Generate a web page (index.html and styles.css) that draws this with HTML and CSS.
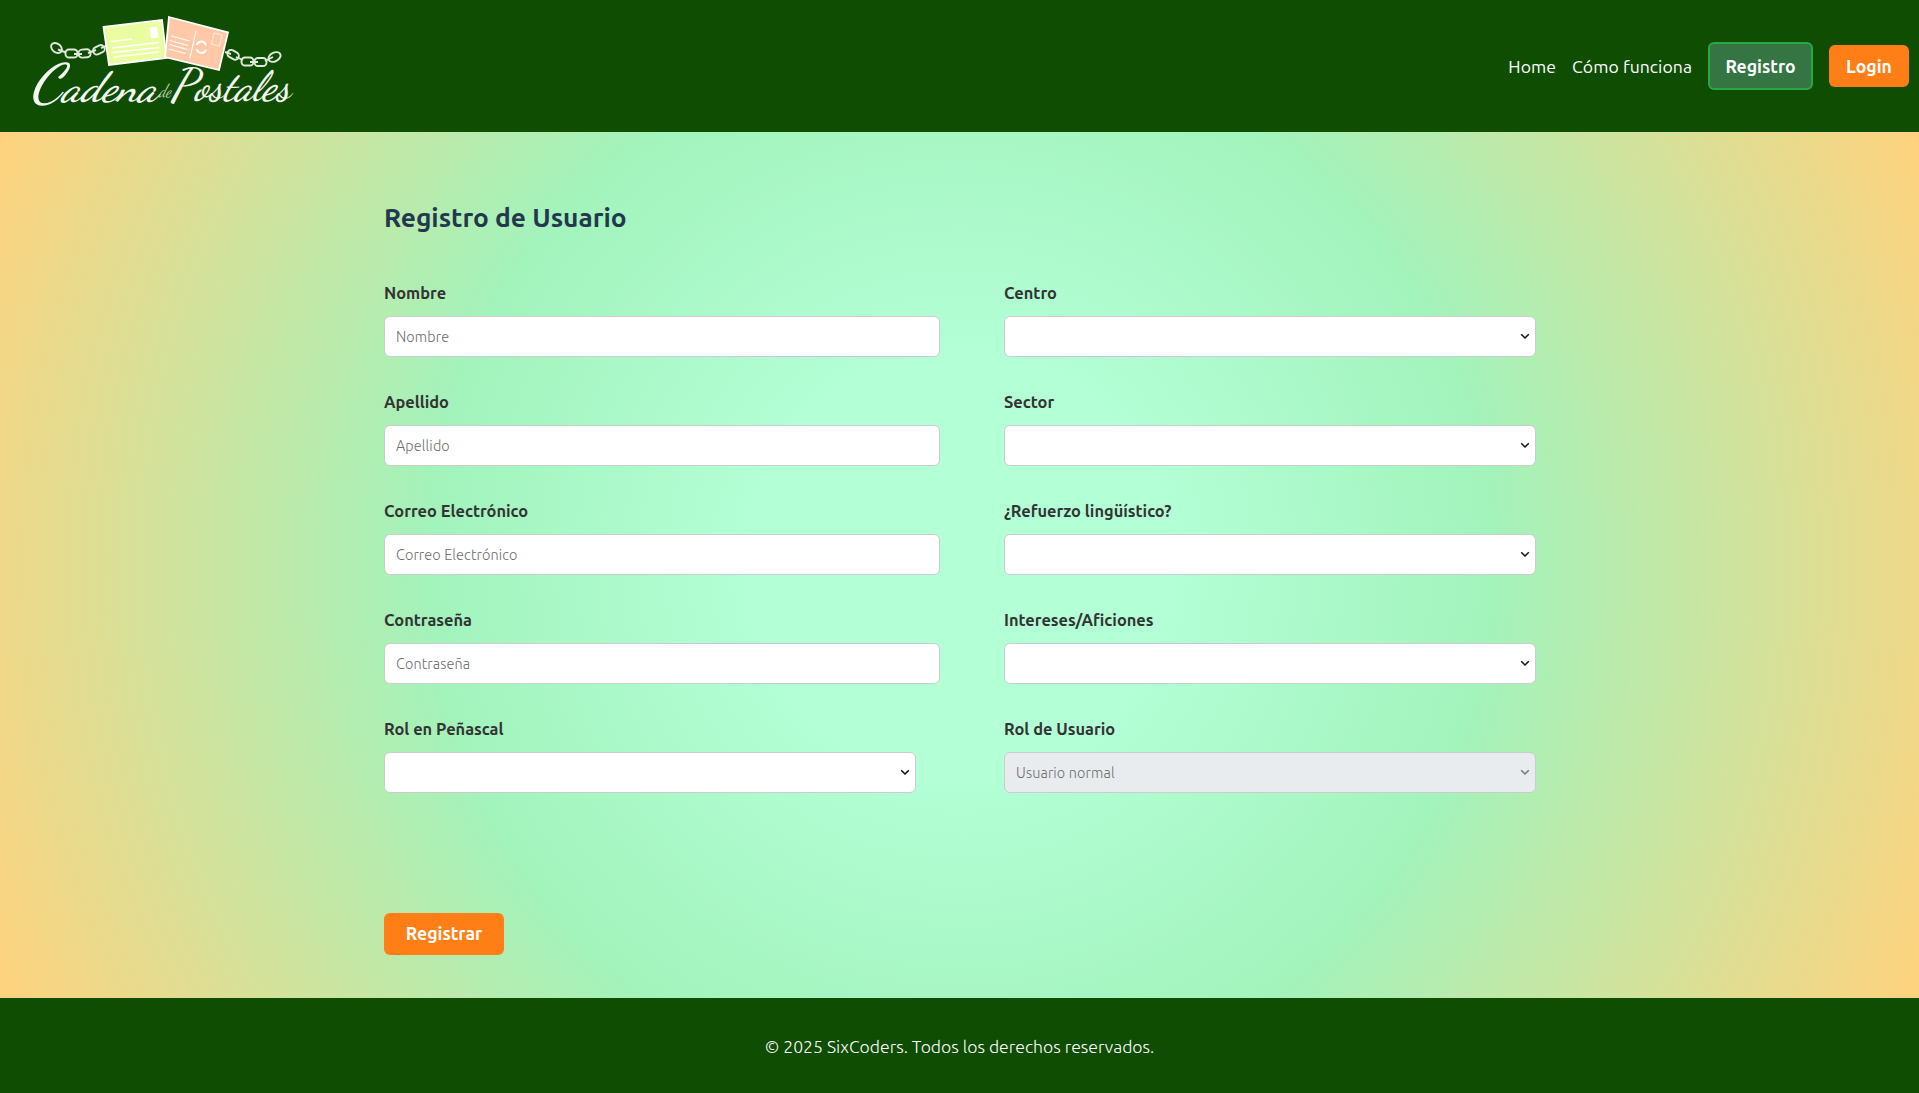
FILE: index.html
```html
<!DOCTYPE html>
<html lang="es">
<head>
<meta charset="utf-8">
<title>Cadena de Postales</title>
<link rel="stylesheet" href="styles.css">
</head>
<body>
<header class="header">
  <a class="logo" href="#" aria-label="Cadena de Postales">
    <svg width="290" height="132" viewBox="20 0 290 132">
      <g fill="none" stroke="#dfe8da" stroke-width="1.9">
        <ellipse cx="56.500" cy="48" rx="6" ry="4.300" transform="rotate(38 56.500 48)"/>
        <rect x="65.500" y="49.500" width="12" height="8" rx="3.500"/>
        <rect x="78.500" y="49.500" width="12" height="8" rx="3.500" transform="rotate(-4 84 53)"/>
        <rect x="93" y="46" width="12" height="7.500" rx="3.700" transform="rotate(-25 99 50)"/>
        <path d="M58 49.500l8 3M74 54h8M88 53l8-3M101 48l5-2"/>
        <rect x="227" y="51" width="12" height="7.500" rx="3.700" transform="rotate(30 233 55)"/>
        <rect x="241.500" y="57.500" width="12" height="8" rx="3.500"/>
        <rect x="254.500" y="58" width="12" height="8" rx="3.500"/>
        <ellipse cx="274.500" cy="57" rx="6.500" ry="4.300" transform="rotate(-28 274.500 57)"/>
        <path d="M225 52l6 2M236 57l7 3M250 62h8M265 61l8-4"/>
      </g>
      <path d="M103.500 27L162 20L166.500 58L109 65Z" fill="#e9fca0" stroke="#fff" stroke-width="1.800"/>
      <path d="M169 17L228 32.500L219 70L165 57Z" fill="#ffc9a8" stroke="#fff" stroke-width="1.800"/>
      <path d="M149.500 27.500l7.500-1 1.500 11-7.500 1z" fill="#fff"/>
      <path d="M111 41.500l21-2.500M112 48l47-5.500M112.500 52.500l47-5M114 57l45-5" stroke="#fff" stroke-width="1.300"/>
      <path d="M196 31l-6 27M171.500 36l18 5M170 40.500l18 5M169.500 44.500l18 5M168.500 49l17 4.500" stroke="#fff" stroke-width="1.100"/>
      <path d="M214 33l8 2-2.500 11-8-2z" fill="none" stroke="#ffe8da" stroke-width="1.200"/>
      <path d="M196.500 45q1.500-3.500 5-3.500t4.500 4M196.500 49q1.500 4 5 4t4.500-3.500" fill="none" stroke="#fff" stroke-width="2"/>
      <text class="logo-word" x="30" y="101" textLength="127" lengthAdjust="spacingAndGlyphs"><tspan class="logo-cap">C</tspan>adena</text>
      <text class="logo-de" x="159" y="97" textLength="12" lengthAdjust="spacingAndGlyphs">de</text>
      <text class="logo-word" x="170" y="100" textLength="120" lengthAdjust="spacingAndGlyphs"><tspan class="logo-cap-p">P</tspan>ostales</text>
    </svg>
  </a>
  <nav class="nav">
    <a class="link" href="#">Home</a>
    <a class="link" href="#">Cómo funciona</a>
    <a class="btn btn-green" href="#">Registro</a>
    <a class="btn btn-orange" href="#">Login</a>
  </nav>
</header>
<main class="main">
  <form class="form">
    <h1 class="title">Registro de Usuario</h1>
    <div class="grid">
      <div class="field"><label class="label">Nombre</label><input class="control" placeholder="Nombre"></div>
      <div class="field"><label class="label">Centro</label><select class="control select"></select></div>
      <div class="field"><label class="label">Apellido</label><input class="control" placeholder="Apellido"></div>
      <div class="field"><label class="label">Sector</label><select class="control select"></select></div>
      <div class="field"><label class="label">Correo Electrónico</label><input class="control" placeholder="Correo Electrónico"></div>
      <div class="field"><label class="label">¿Refuerzo lingüístico?</label><select class="control select"></select></div>
      <div class="field"><label class="label">Contraseña</label><input class="control" placeholder="Contraseña"></div>
      <div class="field"><label class="label">Intereses/Aficiones</label><select class="control select"></select></div>
      <div class="field"><label class="label">Rol en Peñascal</label><select class="control select"></select></div>
      <div class="field"><label class="label">Rol de Usuario</label><select class="control select" disabled><option>Usuario normal</option></select></div>
    </div>
    <button class="submit" type="button">Registrar</button>
  </form>
</main>
<footer class="footer">© 2025 SixCoders. Todos los derechos reservados.</footer>
</body>
</html>
```
FILE: styles.css
```css
* { box-sizing: border-box; }
body {
  margin: 0;
  height: 1093px;
  display: flex;
  flex-direction: column;
  font-family: Ubuntu, "Noto Sans", sans-serif;
}
.header {
  height: 132px;
  display: flex;
  justify-content: space-between;
  background: #0f4d02;
  padding: 0 10px 0 20px;
}
.logo svg { display: block; overflow: visible; }
.logo-word {
  font: italic 600 42px "Dancing Script", "Liberation Serif", cursive;
  fill: #f4f6f0;
}
.logo-cap { font-size: 54px; }
.logo-cap-p { font-size: 46px; }
.logo-de {
  font: italic 19px "Dancing Script", "Liberation Serif", cursive;
  fill: #c8d8c4;
}
.nav { display: flex; align-items: center; gap: 16px; }
.link, .btn { color: #fff; text-decoration: none; white-space: nowrap; }
.link { font-size: 17.6px; letter-spacing: 0.06px; }
.btn {
  display: flex;
  align-items: center;
  justify-content: center;
  font-size: 17.6px;
  font-weight: 600;
  border-radius: 6px;
}
.btn-green { width: 105px; height: 48px; background: #357543; border: 2px solid #28a745; }
.btn-orange { width: 80px; height: 42px; background: #ff7f16; }
.main {
  height: 866px;
  background: radial-gradient(circle, #b3ffd6 20%, #a2f3bc 50%, #ffd27d 100%);
}
.form { width: 1151px; margin: 0 auto; padding-top: 67px; }
.title {
  margin: 0;
  font-size: 26.3px;
  line-height: 36px;
  font-weight: 600;
  color: #23374d;
}
.grid {
  display: grid;
  grid-template-columns: 556px 531px;
  column-gap: 64px;
  row-gap: 32px;
  margin-top: 46px;
}
.field { height: 77px; }
.label {
  display: block;
  font-size: 16.4px;
  line-height: 24px;
  font-weight: 600;
  color: #333;
  margin-bottom: 11px;
}
.control {
  display: block;
  width: 100%;
  height: 41px;
  border: 1px solid #ccc;
  border-radius: 6px;
  background: #fff;
  padding: 0 11px;
  font-family: inherit;
  font-size: 14.4px;
  font-weight: 300;
  letter-spacing: 0.14px;
}
.control::placeholder { color: #6c6c6c; }
.select {
  width: 532px;
  appearance: none;
  background: #fff url("data:image/svg+xml,%3Csvg xmlns='http://www.w3.org/2000/svg' width='10' height='7'%3E%3Cpath d='M1.200 1.200L5 5l3.800-3.800' fill='none' stroke='%23111' stroke-width='1.500'/%3E%3C/svg%3E") no-repeat right 5px center;
}
.select:disabled {
  background-color: #e9ecef;
  background-image: url("data:image/svg+xml,%3Csvg xmlns='http://www.w3.org/2000/svg' width='10' height='7'%3E%3Cpath d='M1.200 1.200L5 5l3.800-3.800' fill='none' stroke='%23777' stroke-width='1.500'/%3E%3C/svg%3E");
  color: #6c6c6c;
  opacity: 1;
}
.submit {
  width: 120px;
  height: 42px;
  margin-top: 119px;
  padding: 0 0 2px;
  border: 0;
  border-radius: 6px;
  background: #ff7f16;
  color: #fff;
  font: 600 17.6px Ubuntu, "Noto Sans", sans-serif;
}
.footer {
  height: 95px;
  display: flex;
  align-items: center;
  justify-content: center;
  padding-top: 2px;
  background: #0f4d02;
  color: #fff;
  font-size: 17.6px;
  font-weight: 300;
}
```
